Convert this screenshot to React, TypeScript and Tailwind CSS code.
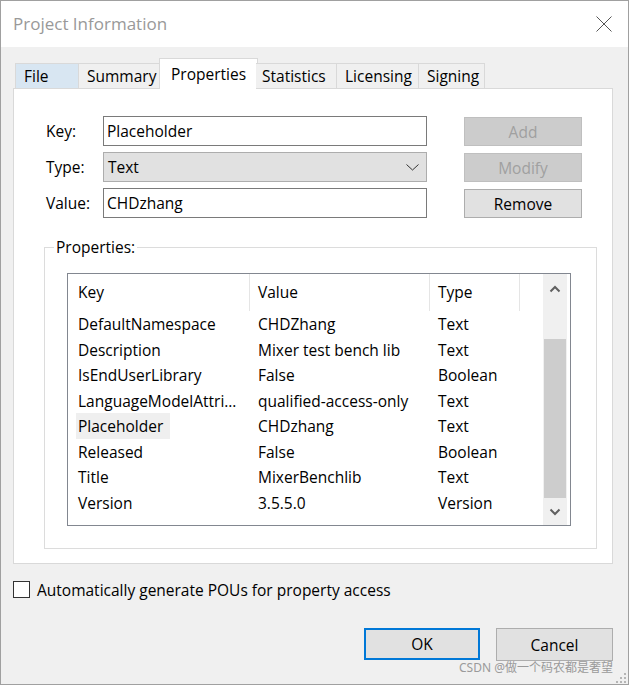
import React from 'react';

interface PropRow {
  key: string;
  value: string;
  type: string;
  selected?: boolean;
}

const ROWS: PropRow[] = [
  { key: 'DefaultNamespace', value: 'CHDZhang', type: 'Text' },
  { key: 'Description', value: 'Mixer test bench lib', type: 'Text' },
  { key: 'IsEndUserLibrary', value: 'False', type: 'Boolean' },
  { key: 'LanguageModelAttri…', value: 'qualified-access-only', type: 'Text' },
  { key: 'Placeholder', value: 'CHDzhang', type: 'Text', selected: true },
  { key: 'Released', value: 'False', type: 'Boolean' },
  { key: 'Title', value: 'MixerBenchlib', type: 'Text' },
  { key: 'Version', value: '3.5.5.0', type: 'Version' },
];

function Chevron({ up }: { up?: boolean }) {
  return (
    <svg width="12" height="8" viewBox="0 0 12 8" className="block">
      <path
        d={up ? 'M1.5 6.5 L6 2 L10.5 6.5' : 'M1.5 1.5 L6 6 L10.5 1.5'}
        fill="none"
        stroke="#606060"
        strokeWidth="2"
      />
    </svg>
  );
}

function Tabs() {
  return (
    <div className="relative z-10 -mb-px flex h-[30px] items-end pl-[2px] text-black">
      <div className="flex h-[26px] w-[63px] items-center border border-[#d9d9d9] border-r-0 bg-[#d8e6f2] pl-[8px] pt-[2px]">
        File
      </div>
      <div className="flex h-[26px] w-[83px] items-center border border-[#d9d9d9] border-r-0 bg-[#f0f0f0] pl-[8px] pt-[2px]">
        Summary
      </div>
      <div className="-mx-[2px] flex h-[31px] w-[99px] items-start border border-b-0 border-[#d9d9d9] bg-white pl-[11px] pt-[4px]">
        Properties
      </div>
      <div className="flex h-[26px] w-[81px] items-center border border-[#d9d9d9] border-l-0 bg-[#f0f0f0] pl-[6px] pt-[2px]">
        Statistics
      </div>
      <div className="flex h-[26px] w-[82px] items-center border border-[#d9d9d9] border-l-0 bg-[#f0f0f0] pl-[8px] pt-[2px]">
        Licensing
      </div>
      <div className="flex h-[26px] w-[66px] items-center border border-[#d9d9d9] border-l-0 bg-[#f0f0f0] pl-[8px] pt-[2px]">
        Signing
      </div>
    </div>
  );
}

function EditForm() {
  return (
    <div className="flex pl-[32px] pt-[27px]">
      <div className="flex flex-col gap-[6px]">
        <div className="flex h-[30px] items-center">
          <span className="w-[57px] pt-[2px]">Key:</span>
          <div className="flex h-[30px] w-[324px] items-center border border-[#7a7a7a] bg-white pl-[3px] pt-[2px]">
            Placeholder
          </div>
        </div>
        <div className="flex h-[30px] items-center">
          <span className="w-[57px] pt-[2px]">Type:</span>
          <div className="flex h-[30px] w-[324px] items-center justify-between border border-[#adadad] bg-[#e1e1e1] pl-[4px] pr-[7px]">
            <span className="pt-[2px]">Text</span>
            <svg width="13" height="7" viewBox="0 0 13 7" className="block">
              <path d="M0.5 0.5 L6.5 6 L12.5 0.5" fill="none" stroke="#333" strokeWidth="1" />
            </svg>
          </div>
        </div>
        <div className="flex h-[30px] items-center">
          <span className="w-[57px] pt-[2px]">Value:</span>
          <div className="flex h-[30px] w-[324px] items-center border border-[#7a7a7a] bg-white pl-[3px] pt-[2px]">
            CHDzhang
          </div>
        </div>
      </div>

      <div className="ml-[37px] flex flex-col gap-[7px] pt-[1px]">
        <div className="flex h-[29px] w-[118px] items-center justify-center border border-[#bfbfbf] bg-[#cccccc] pt-[2px] text-[#a0a0a0]">
          Add
        </div>
        <div className="flex h-[29px] w-[118px] items-center justify-center border border-[#bfbfbf] bg-[#cccccc] pt-[2px] text-[#a0a0a0]">
          Modify
        </div>
        <div className="flex h-[29px] w-[118px] items-center justify-center border border-[#adadad] bg-[#e1e1e1] pt-[2px]">
          Remove
        </div>
      </div>
    </div>
  );
}

function PropertyList() {
  return (
    <div className="flex h-[253px] w-[504px] border border-[#828790] bg-white">
      <div className="w-[475px]">
        {/* Header */}
        <div className="flex h-[37px] items-stretch">
          <div className="flex w-[182px] items-center border-r border-[#e5e5e5] pl-[10px] pt-[1px]">Key</div>
          <div className="flex w-[180px] items-center border-r border-[#e5e5e5] pl-[8px] pt-[1px]">Value</div>
          <div className="flex w-[90px] items-center border-r border-[#e5e5e5] pl-[8px] pt-[1px]">Type</div>
        </div>
        {ROWS.map((row) => (
          <div key={row.key} className="flex h-[25.5px] items-stretch">
            <div className="flex w-[182px] items-stretch overflow-hidden whitespace-nowrap pl-[8px]">
              <span
                className={
                  row.selected
                    ? 'flex w-[94px] items-center bg-[#efefef] pl-[2px] pt-[2px]'
                    : 'flex items-center pl-[2px] pt-[2px]'
                }
              >
                {row.key}
              </span>
            </div>
            <div className="flex w-[180px] items-center whitespace-nowrap pl-[8px] pt-[2px]">{row.value}</div>
            <div className="flex w-[90px] items-center whitespace-nowrap pl-[8px] pt-[2px]">{row.type}</div>
          </div>
        ))}
      </div>

      {/* Scrollbar */}
      <div className="flex w-[24px] flex-col bg-[#f0f0f0]">
        <div className="flex h-[30px] items-center justify-center">
          <Chevron up />
        </div>
        <div className="flex-1">
          <div className="mx-[1px] mt-[35px] h-[159px] bg-[#cdcdcd]" />
        </div>
        <div className="flex h-[26px] items-center justify-center">
          <Chevron />
        </div>
      </div>
      <div className="w-[3px]" />
    </div>
  );
}

export default function App() {
  return (
    <div className="relative flex h-[685px] w-[629px] flex-col overflow-hidden border border-[#a0a0a0] bg-[#f0f0f0] font-['Open_Sans',sans-serif] text-[15.5px] text-black">
      {/* Title bar */}
      <div className="flex h-[46px] shrink-0 items-center justify-between bg-white pl-[12px] pr-[16px]">
        <span className="text-[17px] text-[#999999]">Project Information</span>
        <svg width="16" height="16" viewBox="0 0 16 16" className="block">
          <path d="M0.5 0.5 L15.5 15.5 M15.5 0.5 L0.5 15.5" stroke="#555" strokeWidth="1" />
        </svg>
      </div>

      <div className="flex flex-col px-[12px] pt-[12px]">
        <Tabs />

        <div className="h-[476px] w-[600px] border border-[#d9d9d9] bg-white">
          <EditForm />

          <fieldset className="ml-[30px] mt-[19px] w-[553px] border border-[#dcdcdc] pb-[22px]">
            <legend className="ml-[9px] px-[2px] leading-[20px]">Properties:</legend>
            <div className="ml-[22px] mt-[16px]">
              <PropertyList />
            </div>
          </fieldset>
        </div>

        {/* Checkbox */}
        <div className="mt-[17px] flex h-[17px] items-center">
          <div className="h-[17px] w-[17px] border border-[#333333] bg-white" />
          <span className="ml-[7px] pt-[1px] leading-[17px]">Automatically generate POUs for property access</span>
        </div>

        {/* Dialog buttons */}
        <div className="mt-[30px] flex w-[600px] justify-end gap-[16px]">
          <div className="flex h-[32px] w-[116px] items-center justify-center border-2 border-[#0078d7] bg-[#e1e1e1] pt-[2px]">
            OK
          </div>
          <div className="flex h-[33px] w-[117px] items-center justify-center border border-[#adadad] bg-[#e1e1e1] pt-[2px]">
            Cancel
          </div>
        </div>
      </div>

      {/* Watermark + size grip */}
      <span className="absolute bottom-[8px] right-[15px] font-['Noto_Sans','Noto_Sans_CJK_SC',sans-serif] text-[12px] leading-[16px] text-[#9a9a9a]">
        CSDN @做一个码农都是奢望
      </span>
      <svg width="10" height="10" viewBox="0 0 10 10" className="absolute bottom-[1px] right-[2px]">
        <rect x="8" y="0" width="2" height="2" fill="#b5b5b5" />
        <rect x="4" y="4" width="2" height="2" fill="#b5b5b5" />
        <rect x="8" y="4" width="2" height="2" fill="#b5b5b5" />
        <rect x="0" y="8" width="2" height="2" fill="#b5b5b5" />
        <rect x="4" y="8" width="2" height="2" fill="#b5b5b5" />
        <rect x="8" y="8" width="2" height="2" fill="#b5b5b5" />
      </svg>
    </div>
  );
}
